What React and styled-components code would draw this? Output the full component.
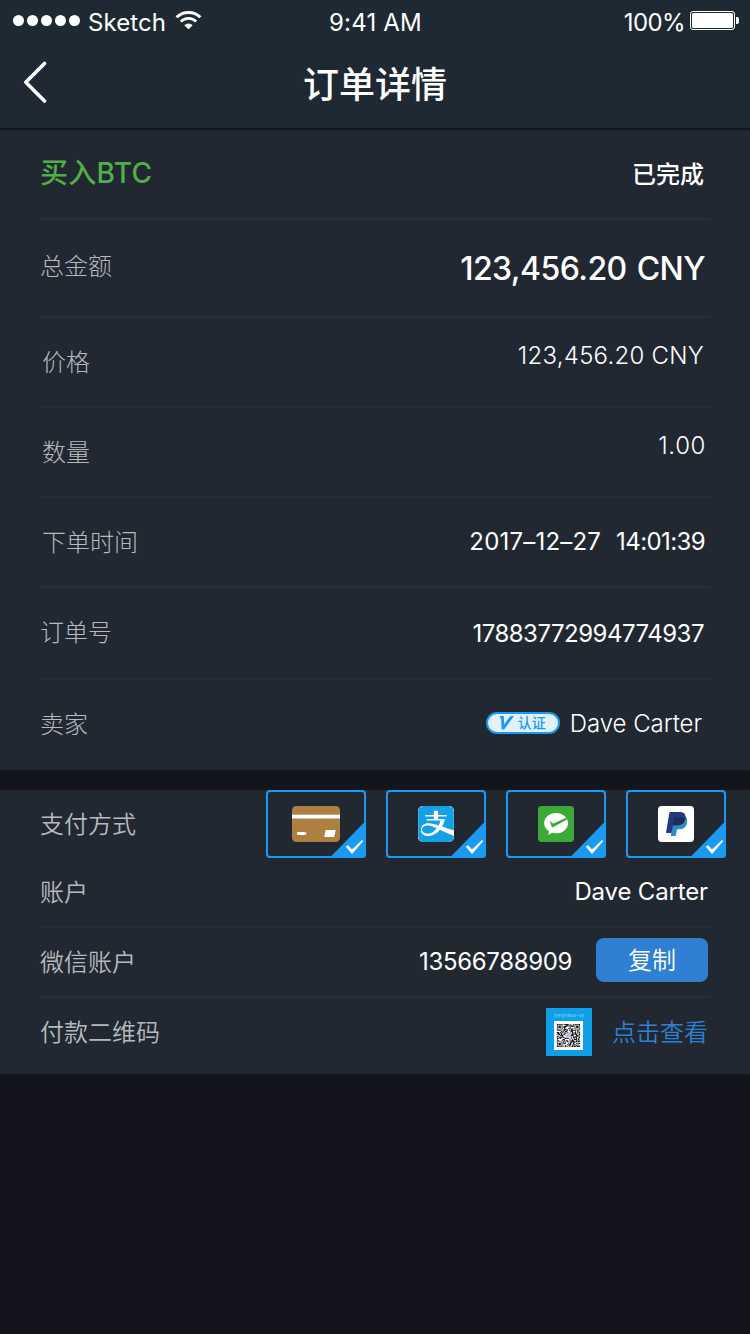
import React from 'react';
import styled, { createGlobalStyle } from 'styled-components';
import { SiAlipay } from 'react-icons/si';

const GlobalStyle = createGlobalStyle`
  *, *::before, *::after { box-sizing: border-box; }
  html, body { margin: 0; padding: 0; background: #14141d; }
  body { font-family: Inter, "Noto Sans CJK SC", sans-serif; color: #fff; }
`;

const Screen = styled.div`
  width: 750px;
  height: 1334px;
  overflow: hidden;
  background: #14141d;
`;

const Header = styled.header`
  height: 130px;
  background: #1f2933;
  border-bottom: 2px solid #14141d;
`;

const StatusBar = styled.div`
  display: grid;
  grid-template-columns: 1fr auto 1fr;
  height: 44px;
  padding: 0 11px 0 13px;
  line-height: 44px;
  font-size: 24px;
  font-weight: 400;
`;

const StatusGroup = styled.div`
  display: flex;
  align-items: flex-start;
  justify-content: ${(p) => (p.$end ? 'flex-end' : 'flex-start')};
  svg { flex: none; }
`;

const StatusText = styled.span`
  white-space: nowrap;
  letter-spacing: ${(p) => p.$spacing || 0}px;
  margin: 1px ${(p) => p.$right || 0}px 0 ${(p) => p.$left || 0}px;
`;

const SignalDots = styled.div`
  display: flex;
  gap: 3px;
  padding-top: 15px;
`;

const Dot = styled.i`
  width: 11px;
  height: 11px;
  border-radius: 50%;
  background: #fff;
`;

const WifiIcon = styled.svg`
  margin: 10px 0 0 9px;
`;

const BatteryIcon = styled.svg`
  margin: 11px 0 0 5px;
`;

const NavBar = styled.nav`
  display: grid;
  grid-template-columns: 100px 1fr 100px;
  align-items: center;
  height: 84px;
  padding-bottom: 4px;
`;

const BackButton = styled.button`
  display: flex;
  padding: 0 0 4px 22px;
  border: 0;
  background: none;
`;

const Title = styled.h1`
  margin: 2px 0 0;
  text-align: center;
  font-size: 36px;
  font-weight: 500;
  line-height: 54px;
`;

const Panel = styled.section`
  background: #212832;
  margin-bottom: 20px;
`;

const Row = styled.div`
  display: flex;
  justify-content: space-between;
  align-items: flex-start;
  height: ${(p) => p.$height}px;
  margin: 0 40px;
  border-bottom: ${(p) => (p.$last ? '0' : '2px solid #232f3a')};
`;

const Label = styled.span`
  margin: ${(p) => p.$top}px 0 0 ${(p) => p.$left || 0}px;
  font-size: 24px;
  line-height: 36px;
  font-weight: ${(p) => p.$weight || 300};
  color: #b7b9bc;
  white-space: nowrap;
`;

const TradeType = styled(Label)`
  font-size: 28px;
  font-weight: 500;
  letter-spacing: 0.3px;
  color: #52ad4b;
`;

const Value = styled.span`
  margin: ${(p) => p.$top}px ${(p) => p.$right || 0}px 0 0;
  font-size: ${(p) => p.$size || 24}px;
  line-height: 36px;
  font-weight: ${(p) => p.$weight || 400};
  letter-spacing: ${(p) => p.$spacing || 0}px;
  word-spacing: ${(p) => p.$word || 0}px;
  white-space: pre;
`;

const Trailing = styled.div`
  display: flex;
  align-items: flex-start;
`;

const Badge = styled.span`
  display: flex;
  align-items: center;
  width: 74px;
  height: 22px;
  margin: 32px 10px 0 0;
  padding-left: 11px;
  border: 2px solid #1b9af3;
  border-radius: 11px;
  background: #e1f2fe;
  color: #1b9af3;
  font-size: 14px;
  line-height: 18px;
  font-weight: 500;
  svg { margin-right: 4px; }
`;

const PayRow = styled.div`
  display: flex;
  justify-content: space-between;
  height: 68px;
  padding: 0 24px 0 40px;
`;

const Methods = styled.div`
  display: flex;
  gap: 20px;
`;

const Method = styled.div`
  position: relative;
  display: flex;
  justify-content: center;
  width: 100px;
  height: 68px;
  padding-top: 14px;
  border: 2px solid #1b9af3;
  border-radius: 4px;
`;

const Corner = styled.svg`
  position: absolute;
  right: -2px;
  bottom: -2px;
`;

const AlipayTile = styled.div`
  width: 36px;
  height: 36px;
  border-radius: 5px;
  overflow: hidden;
  background: #fff;
  color: #12a0e9;
  svg { display: block; }
`;

const CopyButton = styled.button`
  width: 112px;
  height: 44px;
  margin: 10px 2px 0 24px;
  padding: 1px 0 0;
  border: 0;
  border-radius: 8px;
  background: #2f80d2;
  color: #fff;
  font: 350 24px/44px Inter, "Noto Sans CJK SC", sans-serif;
`;

const QrCard = styled.div`
  display: flex;
  flex-direction: column;
  align-items: center;
  width: 46px;
  height: 48px;
  margin: 10px 20px 0 0;
  padding-top: 6px;
  background: #0f9fe8;
  svg { margin: 2px 1px 0 0; }
`;

const QrCaption = styled.span`
  font-size: 3.4px;
  line-height: 5px;
  color: #9fe0ff;
  white-space: nowrap;
`;

const ViewLink = styled.a`
  margin: 17px 2px 0 0;
  font-size: 24px;
  line-height: 36px;
  font-weight: 350;
  color: #2f80d2;
`;

const QR_SIZE = 29;

function isFinder(x, y) {
  const corners = [[0, 0], [QR_SIZE - 7, 0], [0, QR_SIZE - 7]];
  for (const [cx, cy] of corners) {
    const dx = x - cx;
    const dy = y - cy;
    if (dx >= -1 && dx <= 7 && dy >= -1 && dy <= 7) {
      const r = Math.max(Math.abs(dx - 3), Math.abs(dy - 3));
      return r === 3 || r <= 1 ? 1 : 0;
    }
  }
  return null;
}

function buildQr() {
  let seed = 77;
  let d = '';
  for (let y = 0; y < QR_SIZE; y += 1) {
    for (let x = 0; x < QR_SIZE; x += 1) {
      seed = (seed * 1103515245 + 12345) % 2147483648;
      const f = isFinder(x, y);
      if (f === null ? seed / 2147483648 > 0.42 : f) d += `M${x} ${y}h1v1h-1z`;
    }
  }
  return d;
}

const qrPath = buildQr();

function QrCode() {
  return (
    <svg width="29" height="29" viewBox="-3.6 -3.6 36.2 36.2">
      <rect x="-3.6" y="-3.6" width="36.2" height="36.2" fill="#fff" />
      <path d={qrPath} fill="#151515" />
      <rect x="11.5" y="11" width="6.5" height="6.5" rx="1" fill="#b9c3dc" />
    </svg>
  );
}

function SelectedCorner() {
  return (
    <Corner width="36" height="38" viewBox="0 0 36 38">
      <path d="M36 0.500V34a4 4 0 0 1-4 4H-.5z" fill="#1b9af3" />
      <path d="M15.800 26.800l2.300-1.600 3.900 4.300L32 19.900l1.300 1.200L22 34z" fill="#fff" />
    </Corner>
  );
}

function BankCard() {
  return (
    <svg width="48" height="36" viewBox="0 0 48 36">
      <rect width="48" height="36" rx="4.500" fill="#ad7f43" />
      <rect y="8" width="48" height="1" fill="#c9a87d" />
      <rect y="9" width="48" height="3.500" fill="#fff" />
      <rect x="5" y="26" width="9.200" height="3" rx="1.300" fill="#fff" />
      <path d="M34 24h9.200q.6 0 .4.700l-1.300 5.600q-.2.600-.8.600h-8.700q-.7 0-.5-.7l1.200-5.500q.1-.7.500-.7z" fill="#fff" />
    </svg>
  );
}

function WechatPay() {
  return (
    <svg width="36" height="36" viewBox="0 0 108 108">
      <rect width="108" height="108" rx="11" fill="#3da938" />
      <path d="M54 21c20 0 36 13.500 36 30.500S74 82 54 82c-4 0-8-.5-11.500-1.500L31 87l2-11.500C24 70 18.500 61.500 18.500 51.500 18.500 34.500 34 21 54 21z" fill="#fff" />
      <path d="M35 44l9 7.500q2 1.500 4 .5L84 35l4 5-43 23.500q-3 1.500-4.200-1.500z" fill="#3da938" />
    </svg>
  );
}

function Paypal() {
  return (
    <svg width="36" height="36" viewBox="0 0 108 108">
      <rect width="108" height="108" rx="11" fill="#fff" />
      <path d="M81 30c6 4 8 11 6 20-3 14-11 20-23 20h-4q-3 0-3.500 3L54 87q-.5 3-3 3H40q-2 0-1.500-2L46 38z" fill="#2790c9" />
      <path d="M37 18h28c14 0 19 8 17 20-3 14-11 20-24 20H48q-3 0-3.500 3L41 79q-.4 2-2.500 2H26q-2 0-1.700-2L34 21q.4-3 3-3z" fill="#223a7c" />
      <path d="M45 58l3.300-20q.5-3 3.700-3h18c5 0 9 .5 12 2-3 15-11 21-24 21H48q-2 0-3 1.500z" fill="#1d2a5a" />
    </svg>
  );
}

export default function App() {
  return (
    <Screen>
      <GlobalStyle />
      <Header>
        <StatusBar>
          <StatusGroup>
            <SignalDots>
              <Dot /><Dot /><Dot /><Dot /><Dot />
            </SignalDots>
            <StatusText $left={8} $spacing={0.1}>Sketch</StatusText>
            <WifiIcon width="27" height="20" viewBox="0 0 27 20">
              <path d="M1.600 7.300a17 17 0 0 1 23.800 0" fill="none" stroke="#fff" strokeWidth="3" />
              <path d="M5.800 11.600a11 11 0 0 1 15.400 0" fill="none" stroke="#fff" strokeWidth="2.700" />
              <path d="M9.300 15.200a6 6 0 0 1 8.400 0L13.500 19.300z" fill="#fff" />
            </WifiIcon>
          </StatusGroup>
          <StatusText $spacing={0.2} $right={1}>9:41 AM</StatusText>
          <StatusGroup $end>
            <StatusText $spacing={-0.6}>100%</StatusText>
            <BatteryIcon width="49" height="19" viewBox="0 0 49 19">
              <rect x="0.500" y="0.500" width="44" height="18" rx="2.500" fill="none" stroke="#fff" />
              <rect x="2" y="2" width="41" height="15" rx="1.500" fill="#fff" />
              <path d="M46 6h1q2 0 2 2v3q0 2-2 2h-1z" fill="#fff" />
            </BatteryIcon>
          </StatusGroup>
        </StatusBar>
        <NavBar>
          <BackButton aria-label="返回">
            <svg width="26" height="42" viewBox="0 0 26 42">
              <path d="M22.500 2.500L3.800 21.200 22.500 40" fill="none" stroke="#fff" strokeWidth="3.600" strokeLinecap="round" strokeLinejoin="round" />
            </svg>
          </BackButton>
          <Title>订单详情</Title>
        </NavBar>
      </Header>

      <Panel>
        <Row $height={90}>
          <TradeType $top={25}>买入BTC</TradeType>
          <Value $top={27} $right={6} $weight={500}>已完成</Value>
        </Row>
        <Row $height={98}>
          <Label $top={29}>总金额</Label>
          <Value $top={31} $right={5} $size={32} $weight={500} $spacing={-0.55} $word={2}>123,456.20 CNY</Value>
        </Row>
        <Row $height={90}>
          <Label $top={27} $left={2}>价格</Label>
          <Value $top={20} $right={6} $weight={300} $spacing={0.25}>123,456.20 CNY</Value>
        </Row>
        <Row $height={90}>
          <Label $top={27} $left={2}>数量</Label>
          <Value $top={20} $right={4} $weight={300} $spacing={0.6}>1.00</Value>
        </Row>
        <Row $height={90}>
          <Label $top={27} $left={2}>下单时间</Label>
          <Trailing>
            <Value $top={26} $right={15} $spacing={0.2}>2017–12–27</Value>
            <Value $top={26} $right={5} $spacing={-0.6}>14:01:39</Value>
          </Trailing>
        </Row>
        <Row $height={92}>
          <Label $top={27}>订单号</Label>
          <Value $top={28} $right={6} $spacing={-0.5}>17883772994774937</Value>
        </Row>
        <Row $height={90} $last>
          <Label $top={27}>卖家</Label>
          <Trailing>
            <Badge>
              <svg width="15" height="14" viewBox="0 0 15 14">
                <path d="M1 0h3.800l.4 8.500L10.500 1Q11.200 0 12.500 0H15L5 13.500H2.600L2.200 2.500 1 2z" fill="#1b9af3" />
              </svg>
              认证
            </Badge>
            <Value $top={26} $right={8} $weight={300} $spacing={-0.05}>Dave Carter</Value>
          </Trailing>
        </Row>
      </Panel>

      <Panel>
        <PayRow>
          <Label $top={17} $weight={350}>支付方式</Label>
          <Methods>
            <Method><BankCard /><SelectedCorner /></Method>
            <Method><AlipayTile><SiAlipay size={36} /></AlipayTile><SelectedCorner /></Method>
            <Method><WechatPay /><SelectedCorner /></Method>
            <Method><Paypal /><SelectedCorner /></Method>
          </Methods>
        </PayRow>
        <Row $height={70}>
          <Label $top={17} $weight={350}>账户</Label>
          <Value $top={16} $right={2} $spacing={-0.15}>Dave Carter</Value>
        </Row>
        <Row $height={70}>
          <Label $top={17} $weight={350}>微信账户</Label>
          <Trailing>
            <Value $top={16} $spacing={-0.35}>13566788909</Value>
            <CopyButton>复制</CopyButton>
          </Trailing>
        </Row>
        <Row $height={76} $last>
          <Label $top={17} $weight={350}>付款二维码</Label>
          <Trailing>
            <QrCard>
              <QrCaption>打开支付宝[扫一扫]</QrCaption>
              <QrCode />
            </QrCard>
            <ViewLink>点击查看</ViewLink>
          </Trailing>
        </Row>
      </Panel>
    </Screen>
  );
}
